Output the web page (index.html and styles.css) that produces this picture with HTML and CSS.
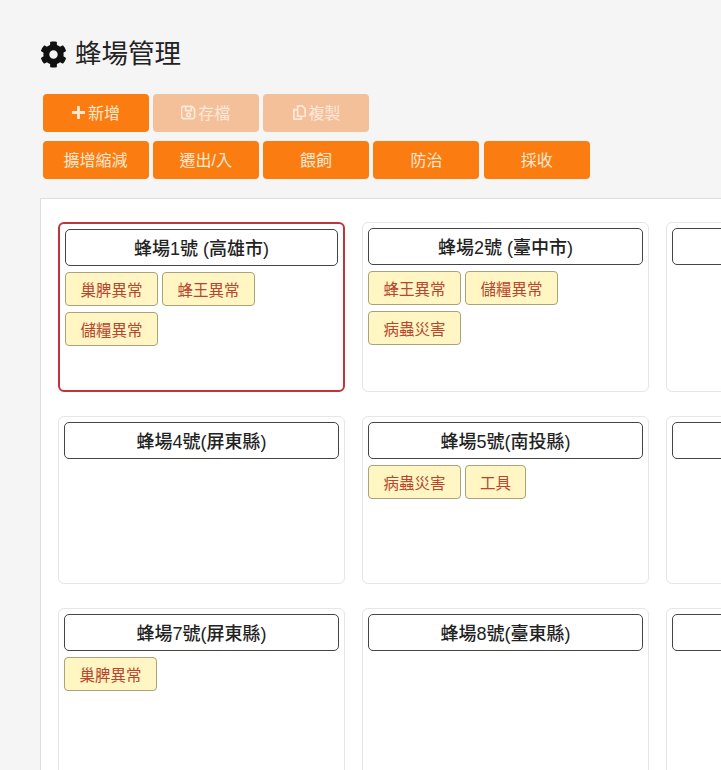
FILE: index.html
```html
<!DOCTYPE html>
<html lang="zh-Hant">
<head>
    <link rel="stylesheet" href="styles.css">
    <meta charset="UTF-8">
    <meta name="viewport" content="width=device-width, initial-scale=1.0">
    <title>蜂場管理</title>
</head>
<body>
    <div class="header">
        <h1 class="page-title">
            <svg class="gear" viewBox="0 0 512 512"><path d="M487.4 315.7l-42.6-24.6c4.3-23.2 4.3-47 0-70.2l42.6-24.6c4.9-2.8 7.1-8.6 5.5-14-11.1-35.6-30-67.8-54.7-94.6-3.8-4.1-10-5.1-14.8-2.3L380.8 110c-17.9-15.4-38.5-27.3-60.8-35.1V25.8c0-5.6-3.9-10.5-9.4-11.7-36.7-8.2-74.3-7.8-109.2 0-5.5 1.2-9.4 6.1-9.4 11.7V75c-22.2 7.9-42.8 19.8-60.8 35.1L88.7 85.5c-4.9-2.8-11-1.9-14.8 2.3-24.7 26.7-43.6 58.9-54.7 94.6-1.7 5.4.6 11.2 5.5 14L67.3 221c-4.3 23.2-4.3 47 0 70.2l-42.6 24.6c-4.9 2.8-7.1 8.6-5.5 14 11.1 35.6 30 67.8 54.7 94.6 3.8 4.1 10 5.1 14.8 2.3l42.6-24.6c17.9 15.4 38.5 27.3 60.8 35.1v49.2c0 5.6 3.9 10.5 9.4 11.7 36.7 8.2 74.3 7.8 109.2 0 5.5-1.2 9.4-6.1 9.4-11.7v-49.2c22.2-7.9 42.8-19.8 60.8-35.1l42.6 24.6c4.9 2.8 11 1.9 14.8-2.3 24.7-26.7 43.6-58.9 54.7-94.6 1.5-5.5-.7-11.3-5.6-14.1zM256 336c-44.1 0-80-35.9-80-80s35.9-80 80-80 80 35.9 80 80-35.9 80-80 80z"/></svg>
            <span class="title-text">蜂場管理</span>
        </h1>
        <div class="toolbar">
            <button class="btn">
                <svg class="btn-icon" viewBox="0 0 16 16"><path d="M8 1v14M1 8h14" stroke="currentColor" stroke-width="3" fill="none"/></svg>新增
            </button>
            <button class="btn off">
                <svg class="btn-icon" viewBox="0 0 16 16" fill="none" stroke="currentColor" stroke-width="1.8"><path d="M2.5 1.5h9l3 3v8a2 2 0 0 1-2 2h-10a2 2 0 0 1-2-2v-9a2 2 0 0 1 2-2z"/><path d="M5 2v4h6V2"/><circle cx="8" cy="10.5" r="2"/></svg>存檔
            </button>
            <button class="btn off">
                <svg class="btn-icon" viewBox="0 0 16 16" fill="none" stroke="currentColor" stroke-width="1.8"><path d="M6 1h5l3 3v8H6z"/><path d="M6 5H2v10h8v-3"/></svg>複製
            </button>
        </div>
        <div class="toolbar">
            <button class="btn">擴增縮減</button>
            <button class="btn">遷出/入</button>
            <button class="btn">餵飼</button>
            <button class="btn">防治</button>
            <button class="btn">採收</button>
        </div>
    </div>

    <div class="panel">
        <div class="farm-grid">
            <div class="farm selected">
                <div class="farm-name">蜂場1號 (高雄市)</div>
                <div class="tags">
                    <span class="tag">巢脾異常</span>
                    <span class="tag">蜂王異常</span>
                    <span class="tag">儲糧異常</span>
                </div>
            </div>
            <div class="farm">
                <div class="farm-name">蜂場2號 (臺中市)</div>
                <div class="tags">
                    <span class="tag">蜂王異常</span>
                    <span class="tag">儲糧異常</span>
                    <span class="tag">病蟲災害</span>
                </div>
            </div>
            <div class="farm"><div class="farm-name"></div></div>

            <div class="farm">
                <div class="farm-name">蜂場4號(屏東縣)</div>
            </div>
            <div class="farm">
                <div class="farm-name">蜂場5號(南投縣)</div>
                <div class="tags">
                    <span class="tag">病蟲災害</span>
                    <span class="tag short">工具</span>
                </div>
            </div>
            <div class="farm"><div class="farm-name"></div></div>

            <div class="farm">
                <div class="farm-name">蜂場7號(屏東縣)</div>
                <div class="tags">
                    <span class="tag">巢脾異常</span>
                </div>
            </div>
            <div class="farm">
                <div class="farm-name">蜂場8號(臺東縣)</div>
            </div>
            <div class="farm"><div class="farm-name"></div></div>
        </div>
    </div>
</body>
</html>
```

FILE: styles.css
```css
html, body {
    height: 100%;
}

body {
    margin: 0;
    overflow: hidden;
    background-color: #f5f5f6;
    color: #222;
    font-family: "Liberation Sans", "Noto Sans CJK TC", sans-serif;
}

.header {
    padding: 36px 0 0 42.5px;
}

.page-title {
    display: flex;
    align-items: center;
    gap: 8px;
    height: 36px;
    margin: 0 0 22px -2.5px;
    font-size: 26.5px;
    font-weight: 400;
}

.title-text {
    line-height: 34px;
}

.gear {
    width: 27px;
    height: 27px;
    fill: #111;
}

.toolbar {
    display: flex;
    gap: 4.3px;
    margin-bottom: 9px;
}

.btn {
    display: flex;
    justify-content: center;
    align-items: center;
    gap: 2px;
    width: 106px;
    height: 38px;
    padding: 0 0 2px;
    border: none;
    border-radius: 4px;
    background-color: #fb7d12;
    color: #ffe9d2;
    font-family: inherit;
    font-size: 16px;
}

.btn.off {
    background-color: #f4c09a;
    color: #fbe9da;
}

.btn-icon {
    width: 15px;
    height: 15px;
}

.panel {
    margin: 19px 0 0 40px;
    padding: 23px 0 0 17px;
    height: 600px;
    background-color: #fff;
    border-top: 1px solid #ddd;
    border-left: 1px solid #ddd;
}

.farm-grid {
    display: grid;
    grid-template-columns: repeat(3, 287px);
    grid-template-rows: 170px 168px 168px;
    column-gap: 17px;
    row-gap: 24px;
}

.farm {
    box-sizing: border-box;
    padding: 5px;
    background-color: #fff;
    border: 1px solid #e6e6e6;
    border-radius: 6px;
}

.farm.selected {
    border: 2px solid #c0333c;
}

.farm-name {
    box-sizing: border-box;
    height: 37px;
    line-height: 38px;
    background-color: #fff;
    border: 1px solid #444;
    border-radius: 5px;
    text-align: center;
    font-size: 18px;
    font-weight: 500;
    color: #222;
}

.tags {
    display: flex;
    flex-wrap: wrap;
    gap: 6px 4px;
    margin-top: 6px;
}

.tag {
    box-sizing: border-box;
    width: 93px;
    height: 34px;
    line-height: 35px;
    text-align: center;
    background-color: #fff6c4;
    border: 1px solid #a9a27c;
    border-radius: 4px;
    color: #b8452c;
    font-size: 15.5px;
}

.tag.short {
    width: 61px;
}
```
